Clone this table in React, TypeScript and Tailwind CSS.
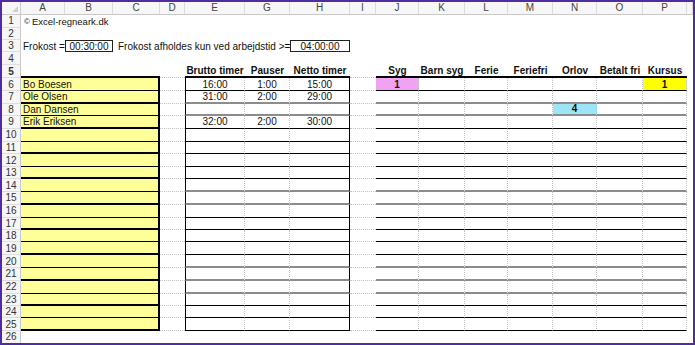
const COLS =
  'grid grid-rows-[minmax(0,1fr)] grid-cols-[19px_44px_48px_47px_25px_60px_45px_60px_26px_43px_46px_43px_45px_44px_46px_44px_1fr]';

const ROW_H = ['h-[13px]', 'h-[13px]', 'h-[12px]', 'h-[13px]', 'h-[13px]'];

const LETTERS = ['A', 'B', 'C', 'D', 'E', 'G', 'H', 'I', 'J', 'K', 'L', 'M', 'N', 'O', 'P', ''];

const PEOPLE: Record<number, { name: string; brutto?: string; pause?: string; netto?: string }> = {
  6: { name: 'Bo Boesen', brutto: '16:00', pause: '1:00', netto: '15:00' },
  7: { name: 'Ole Olsen', brutto: '31:00', pause: '2:00', netto: '29:00' },
  8: { name: 'Dan Dansen' },
  9: { name: 'Erik Eriksen', brutto: '32:00', pause: '2:00', netto: '30:00' },
};

const ABSENCE = ['Syg', 'Barn syg', 'Ferie', 'Feriefri', 'Orlov', 'Betalt fri', 'Kursus'];

const MARKS: Record<string, { value: string; bg: string }> = {
  '6-0': { value: '1', bg: 'bg-[#f2a2f2]' },
  '8-4': { value: '4', bg: 'bg-[#9ee4f7]' },
  '6-6': { value: '1', bg: 'bg-[#ffff00]' },
};

const GRAY_ROWS = [7, 8, 14, 15, 20, 21, 22];

const rowHead = 'flex items-center justify-center bg-[#f6f6f6] border-r border-r-[#c9c9c9] border-b border-b-[#dedede] text-[10px] text-[#333]';
const dotB = 'border-b border-b-[#c4c4c4] [border-bottom-style:dotted]';
const dotR = 'border-r border-r-[#c4c4c4] [border-right-style:dotted]';

function lineCls(r: number) {
  return GRAY_ROWS.includes(r) ? 'border-b-2 border-b-[#8c8c8c]' : 'border-b border-b-black';
}

function HeaderRow() {
  return (
    <div className={`${COLS} h-[13px] bg-[#f6f6f6] border-b border-b-[#c9c9c9]`}>
      <div className="relative border-r border-r-[#c9c9c9]">
        <svg className="absolute right-[2px] bottom-[2px]" width="6" height="6" viewBox="0 0 6 6">
          <path d="M6 0 L6 6 L0 6 Z" fill="#cfcfcf" />
        </svg>
      </div>
      {LETTERS.map((l, i) => (
        <div key={i} className="flex items-center justify-center border-r border-r-[#dadada] text-[10px] text-[#444]">
          {l}
        </div>
      ))}
    </div>
  );
}

function Row({ r }: { r: number }) {
  const h = ROW_H[(r - 1) % 5];

  if (r === 1 || r === 2 || r === 4) {
    return (
      <div className={`${COLS} ${h}`}>
        <div className={rowHead}>{r}</div>
        <div className="col-span-16 flex items-center pl-[3px] text-[9.5px] text-[#111] whitespace-nowrap">
          {r === 1 && (
            <>
              <span className="text-[8px] mr-[2px]">©</span>Excel-regneark.dk
            </>
          )}
        </div>
      </div>
    );
  }

  if (r === 3) {
    return (
      <div className={`${COLS} ${h} text-[10px] text-[#111]`}>
        <div className={rowHead}>{r}</div>
        <div className="flex items-center pl-[2px] whitespace-nowrap">Frokost =</div>
        <div className="flex items-center justify-center border border-[#222]">00:30:00</div>
        <div className="col-span-4 flex items-center pl-[5px] whitespace-nowrap">
          Frokost afholdes kun ved arbejdstid &gt;=
        </div>
        <div className="flex items-center justify-center border border-[#222]">04:00:00</div>
        <div className="col-span-9" />
      </div>
    );
  }

  if (r === 5) {
    return (
      <div className={`${COLS} ${h} text-[10px] font-bold text-[#111]`}>
        <div className={rowHead}>{r}</div>
        <div className="col-span-3 border-b-2 border-b-black" />
        <div className={dotB} />
        {['Brutto timer', 'Pauser', 'Netto timer'].map((t) => (
          <div key={t} className="flex items-center justify-center whitespace-nowrap border-b-2 border-b-black">
            {t}
          </div>
        ))}
        <div className={dotB} />
        {ABSENCE.map((t) => (
          <div key={t} className="flex items-center justify-center whitespace-nowrap border-b-2 border-b-black">
            {t}
          </div>
        ))}
        <div />
      </div>
    );
  }

  const p = PEOPLE[r];
  const line = lineCls(r);
  const yellowLine = r % 2 === 1 ? 'border-b-2 border-b-black' : 'border-b border-b-black';

  return (
    <div className={`${COLS} ${h} text-[10px] text-[#111]`}>
      <div className={rowHead}>{r}</div>
      <div className={`col-span-3 flex items-center pl-[2px] bg-[#ffff99] border-r-2 border-r-black whitespace-nowrap ${yellowLine}`}>
        {p?.name}
      </div>
      <div className={dotB} />
      <div className={`flex items-center justify-center border-l border-l-black ${dotR} ${line}`}>{p?.brutto}</div>
      <div className={`flex items-center justify-center ${dotR} ${line}`}>{p?.pause}</div>
      <div className={`flex items-center justify-center border-r border-r-black ${line}`}>{p?.netto}</div>
      <div className={dotB} />
      {ABSENCE.map((t, i) => {
        const m = MARKS[`${r}-${i}`];
        return (
          <div key={t} className={`flex items-center justify-center font-bold ${dotR} ${line} ${m?.bg ?? ''}`}>
            {m?.value}
          </div>
        );
      })}
      <div />
    </div>
  );
}

export default function App() {
  const rows = Array.from({ length: 25 }, (_, i) => i + 1);
  return (
    <div className="w-[695px] h-[345px] overflow-hidden bg-white border-2 border-[#4f2d9f] font-['Liberation_Sans',Arial,sans-serif] leading-[11px] flex flex-col">
      <HeaderRow />
      {rows.map((r) => (
        <Row key={r} r={r} />
      ))}
      <div className={`${COLS} flex-1`}>
        <div className="flex items-start justify-center bg-[#f6f6f6] border-r border-r-[#c9c9c9] text-[10px] text-[#333] leading-[12px]">
          26
        </div>
      </div>
    </div>
  );
}
